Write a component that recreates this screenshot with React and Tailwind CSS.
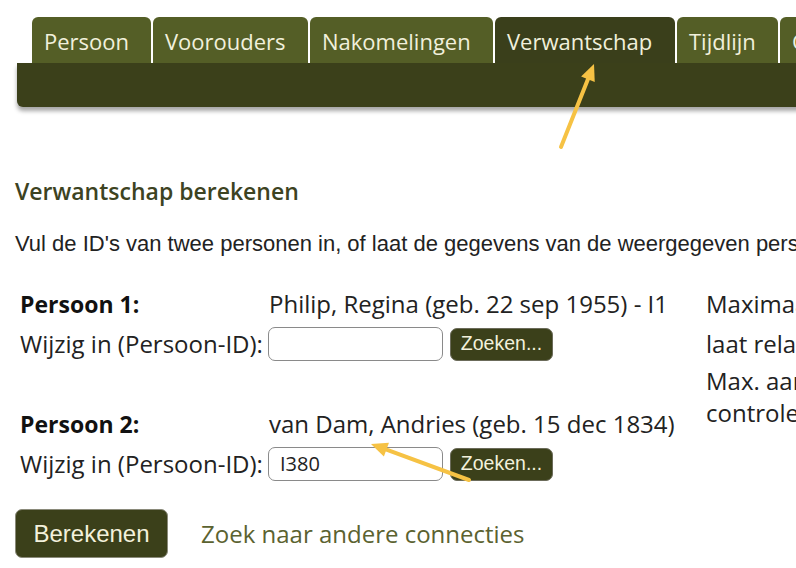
import React from "react";

const tabs = [
  { label: "Persoon", w: "w-[119px]" },
  { label: "Voorouders", w: "w-[155px]" },
  { label: "Nakomelingen", w: "w-[183px]" },
  { label: "Verwantschap", w: "w-[180px]", active: true },
  { label: "Tijdlijn", w: "w-[101px]" },
  { label: "Groepsblad", w: "w-[140px]" },
];

function Arrow({ x1, y1, x2, y2 }) {
  const ang = Math.atan2(y2 - y1, x2 - x1);
  const len = 18;
  const spread = 0.42;
  const p1 = [x2 - len * Math.cos(ang - spread), y2 - len * Math.sin(ang - spread)];
  const p2 = [x2 - len * Math.cos(ang + spread), y2 - len * Math.sin(ang + spread)];
  const bx = x2 - 10 * Math.cos(ang);
  const by = y2 - 10 * Math.sin(ang);
  return (
    <g>
      <line x1={x1} y1={y1} x2={bx} y2={by} stroke="#f6c244" strokeWidth="4" strokeLinecap="round" />
      <polygon points={`${x2},${y2} ${p1[0]},${p1[1]} ${p2[0]},${p2[1]}`} fill="#f6c244" />
    </g>
  );
}

function PersonBlock({ label, value, id }) {
  return (
    <div className="flex flex-col">
      <div className="flex items-center h-[40px]">
        <div className="w-[249px] shrink-0 font-bold text-[23px] text-[#111]">{label}</div>
        <div className="text-[24px] text-[#222] whitespace-nowrap">{value}</div>
      </div>
      <div className="flex items-center h-[40px]">
        <div className="w-[248px] shrink-0 text-[24px] text-[#222] whitespace-nowrap">Wijzig in (Persoon-ID):</div>
        <div className="w-[175px] h-[34px] border border-[#8a8a8a] rounded-[7px] bg-white flex items-center px-[11px] text-[20px] text-[#222]">
          {id}
        </div>
        <button className="ml-[7px] w-[103px] h-[33px] bg-[#3b401a] rounded-[7px] text-[#f3f1dc] text-[19.5px] font-['Liberation_Sans',Arial,sans-serif] border border-[#6b6b5a]">
          Zoeken...
        </button>
      </div>
    </div>
  );
}

export default function App() {
  return (
    <div className="relative w-[796px] h-[568px] overflow-hidden bg-white font-['Open_Sans',sans-serif]">
      {/* Tabs */}
      <div className="flex gap-[2px] pl-[32px] pt-[17px]">
        {tabs.map((t) => (
          <div
            key={t.label}
            className={`${t.w} shrink-0 h-[46px] rounded-t-[6px] pl-[12px] pt-[2px] flex items-center text-[22px] text-[#f1f0dc] whitespace-nowrap overflow-hidden ${
              t.active ? "bg-[#3a3f1b]" : "bg-[#545e26]"
            }`}
          >
            {t.label}
          </div>
        ))}
      </div>
      <div className="ml-[17px] w-[800px] h-[44px] bg-[#3b401a] rounded-bl-[6px] shadow-[0_4px_4px_rgba(0,0,0,0.35)]" />

      {/* Content */}
      <div className="pl-[15px] pt-[70px]">
        <h2 className="text-[23px] leading-[28px] text-[#3d4322] font-semibold">Verwantschap berekenen</h2>
        <p className="mt-[28px] text-[22px] leading-[22px] text-[#222] whitespace-nowrap font-['Liberation_Sans',Arial,sans-serif]">
          Vul de ID's van twee personen in, of laat de gegevens van de weergegeven personen staan.
        </p>

        <div className="flex mt-[29px]">
          <div className="w-[691px] shrink-0 pl-[5px] flex flex-col gap-[40px]">
            <PersonBlock label="Persoon 1:" value="Philip, Regina (geb. 22 sep 1955) - I1" id="" />
            <PersonBlock label="Persoon 2:" value="van Dam, Andries (geb. 15 dec 1834)" id="I380" />
          </div>
          <div className="text-[24px] text-[#222] whitespace-nowrap">
            <div className="h-[40px] flex items-center">Maximaal aantal relaties:</div>
            <div className="h-[39px] flex items-center">laat relaties zien</div>
            <div className="mt-[2px] leading-[32px]">
              <div>Max. aantal generaties</div>
              <div>controleren:</div>
            </div>
          </div>
        </div>

        <div className="flex items-center mt-[25px]">
          <button className="w-[153px] h-[49px] bg-[#3b401a] rounded-[7px] border border-[#8a8a7a] text-[#f3f1dc] text-[24px] font-['Liberation_Sans',Arial,sans-serif]">
            Berekenen
          </button>
          <span className="ml-[33px] text-[24px] text-[#5b6230]">Zoek naar andere connecties</span>
        </div>
      </div>

      {/* Annotation arrows */}
      <svg className="absolute inset-0 pointer-events-none" width="796" height="568">
        <Arrow x1={561} y1={147} x2={594} y2={64} />
        <Arrow x1={469} y1={480} x2={371} y2={444} />
      </svg>
    </div>
  );
}
